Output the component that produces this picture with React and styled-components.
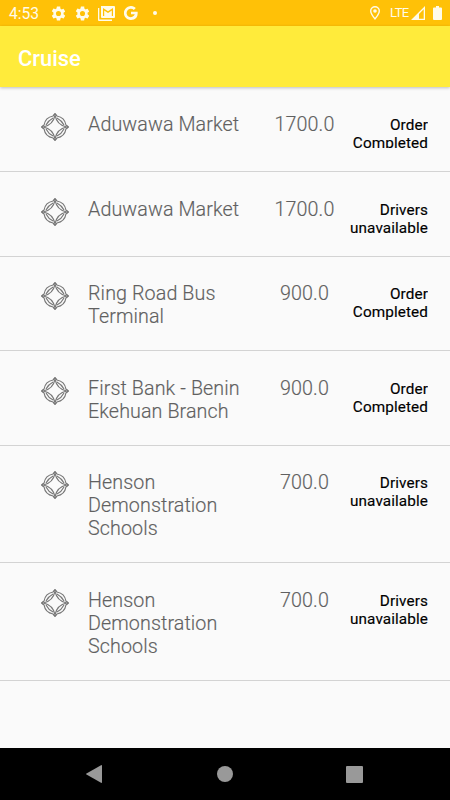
import React from 'react';
import styled, { createGlobalStyle } from 'styled-components';

const GlobalStyle = createGlobalStyle`
  * { box-sizing: border-box; }
  body { margin: 0; background: #fafafa; font-family: Roboto, sans-serif; }
`;

const Screen = styled.div`
  width: 450px;
  height: 800px;
  display: flex;
  flex-direction: column;
  overflow: hidden;
  background: #fafafa;
`;

const StatusBar = styled.header`
  height: 26px;
  flex: none;
  display: flex;
  align-items: center;
  justify-content: space-between;
  padding: 0 8px 0 9px;
  background: #ffc107;
  color: #fffbea;
`;

const StatusGroup = styled.div`
  display: flex;
  align-items: center;
  height: 26px;
`;

const Clock = styled.span`
  width: 41px;
  font-size: 15.6px;
  line-height: 26px;
  padding-top: 2px;
`;

const Network = styled.span`
  width: 21px;
  font-size: 13px;
  line-height: 26px;
  letter-spacing: -0.6px;
  white-space: nowrap;
`;

const Glyph = styled.svg`
  display: block;
  flex: none;
  fill: currentColor;
  width: ${(p) => p.$w || 16}px;
  height: ${(p) => p.$h || p.$w || 16}px;
  margin-left: ${(p) => p.$gap || 0}px;
`;

const AppBar = styled.div`
  height: 61px;
  flex: none;
  display: flex;
  align-items: center;
  padding: 4px 18px 0;
  background: #ffeb3b;
  color: #fff;
  box-shadow: 0 1px 3px rgba(0, 0, 0, 0.24);
  z-index: 1;
`;

const Title = styled.h1`
  margin: 0;
  font-size: 21.9px;
  font-weight: 500;
  line-height: 26px;
`;

const OrderList = styled.ul`
  flex: 1;
  min-height: 0;
  margin: 0;
  padding: 0;
  list-style: none;
`;

const OrderRow = styled.li`
  display: grid;
  grid-template-columns: 47px 170px 92px 78px;
  align-items: start;
  height: ${(p) => p.$height}px;
  padding: 25.6px 22px 0 41px;
  border-bottom: 1px solid #d3d3d3;
`;

const Place = styled.span`
  color: #606060;
  font-size: 19.7px;
  font-weight: 300;
  line-height: 23px;
  letter-spacing: 0.1px;
  -webkit-text-stroke: 0.15px #606060;
  white-space: pre-line;
`;

const Fare = styled(Place)`
  padding-left: 1px;
  text-align: center;
`;

const Status = styled.span`
  height: ${(p) => (p.$clipped ? 35.4 : 42)}px;
  margin-left: -10px;
  padding-top: 3px;
  overflow: hidden;
  color: #000;
  font-size: 15.3px;
  letter-spacing: 0.1px;
  -webkit-text-stroke: 0.15px #000;
  line-height: 18px;
  text-align: right;
  white-space: pre-line;
`;

const NavBar = styled.nav`
  height: 52px;
  flex: none;
  display: flex;
  align-items: center;
  justify-content: space-between;
  padding: 0 87px 0 86px;
  background: #000;
  color: #999;
`;

const orders = [
  { place: 'Aduwawa Market', fare: '1700.0', status: 'Order\nCompleted', height: 85, clipped: true },
  { place: 'Aduwawa Market', fare: '1700.0', status: 'Drivers\nunavailable', height: 84.5 },
  { place: 'Ring Road Bus\nTerminal', fare: '900.0', status: 'Order\nCompleted', height: 94.5 },
  { place: 'First Bank - Benin\nEkehuan Branch', fare: '900.0', status: 'Order\nCompleted', height: 94.5 },
  { place: 'Henson\nDemonstration\nSchools', fare: '700.0', status: 'Drivers\nunavailable', height: 117.5 },
  { place: 'Henson\nDemonstration\nSchools', fare: '700.0', status: 'Drivers\nunavailable', height: 117.5 },
];

const gearPath =
  'M19.14 12.94c.04-.3.06-.61.06-.94 0-.32-.02-.64-.07-.94l2.03-1.58a.49.49 0 0 0 .12-.61l-1.92-3.32a.49.49 0 0 0-.59-.22l-2.39.96a7 7 0 0 0-1.62-.94l-.36-2.54A.48.48 0 0 0 13.92 2h-3.84a.48.48 0 0 0-.47.41l-.36 2.54c-.59.24-1.13.57-1.62.94l-2.39-.96a.48.48 0 0 0-.59.22L2.74 8.47a.48.48 0 0 0 .12.61l2.03 1.58a6 6 0 0 0 0 2.68l-2.03 1.58a.49.49 0 0 0-.12.61l1.92 3.32c.12.22.37.29.59.22l2.39-.96c.5.38 1.03.7 1.62.94l.36 2.54c.05.24.24.41.48.41h3.84c.24 0 .44-.17.47-.41l.36-2.54a7 7 0 0 0 1.62-.94l2.39.96c.22.08.47 0 .59-.22l1.92-3.32a.48.48 0 0 0-.12-.61zM12 15.6A3.6 3.6 0 1 1 12 8.4a3.6 3.6 0 0 1 0 7.2z';

function Gear({ gap }) {
  return (
    <Glyph $w={17} $gap={gap} viewBox="0 0 24 24">
      <path d={gearPath} />
    </Glyph>
  );
}

function CompassMark() {
  return (
    <Glyph $w={28} $h={28} viewBox="-14 -14 28 28">
      <g fill="none" stroke="#777" strokeWidth="1.15" strokeLinejoin="round">
        {[0, 90, 180, 270].map((angle) => (
          <g key={angle} transform={`rotate(${angle})`}>
            <path d="M0-13.4 1.9-11A11.2 11.2 0 0 1 11-1.9L13.4 0" />
            <path d="M0-13.4-1.9-11" />
            <path d="M13.4 0 11 1.9" />
            <path d="M0-11.6Q2-2 11.6 0" />
            <path d="M1.9-9Q6.6-6.6 9-1.9" />
          </g>
        ))}
      </g>
    </Glyph>
  );
}

export default function App() {
  return (
    <>
      <GlobalStyle />
      <Screen>
        <StatusBar>
          <StatusGroup>
            <Clock>4:53</Clock>
            <Gear />
            <Gear gap={7} />
            <Glyph $w={17} $h={15} $gap={7} viewBox="0 0 17 15">
              <path fillRule="evenodd" d="M3 0h13q1 0 1 1v10q0 1-1 1H4q-1 0-1-1zM5 2v8h1.2V4.5L10 7l3.8-2.5V10H15V2l-5 3.3z" />
              <path d="M0 2h1.3v11.5H14V15H1q-1 0-1-1z" />
            </Glyph>
            <Glyph $w={14} $gap={9} viewBox="0 0 14 14">
              <path d="M7 5.7h6.6Q14.4 14 7 14A7 7 0 1 1 11.8 2L9.8 4A4.2 4.2 0 1 0 10.8 8.3H7z" />
            </Glyph>
            <Glyph $w={4} $gap={15} viewBox="0 0 4 4"><circle cx="2" cy="2" r="2" /></Glyph>
          </StatusGroup>
          <StatusGroup>
            <Glyph $w={10} $h={14} viewBox="0 0 10 14">
              <path fillRule="evenodd" d="M5 0a5 5 0 0 1 5 5Q10 8 5 14 0 8 0 5a5 5 0 0 1 5-5zm0 1.4A3.6 3.6 0 0 0 1.4 5Q1.4 7.2 5 11.8 8.6 7.2 8.6 5A3.6 3.6 0 0 0 5 1.4z" />
              <circle cx="5" cy="5" r="1.8" />
            </Glyph>
            <Glyph $w={10} viewBox="0 0 10 10" />
            <Network>LTE</Network>
            <Glyph $w={14} $h={14} viewBox="0 0 14 14">
              <path fillRule="evenodd" d="M14 0v14H0zM12.7 3.2 8 7.9v4.8h4.7z" />
            </Glyph>
            <Glyph $w={9} $h={14} $gap={8} viewBox="0 0 9 14">
              <path d="M3 0h3v1.5h2q1 0 1 1V13q0 1-1 1H1q-1 0-1-1V2.5q0-1 1-1h2z" />
            </Glyph>
          </StatusGroup>
        </StatusBar>
        <AppBar>
          <Title>Cruise</Title>
        </AppBar>
        <OrderList>
          {orders.map((order, i) => (
            <OrderRow key={i} $height={order.height}>
              <CompassMark />
              <Place>{order.place}</Place>
              <Fare>{order.fare}</Fare>
              <Status $clipped={order.clipped}>{order.status}</Status>
            </OrderRow>
          ))}
        </OrderList>
        <NavBar>
          <Glyph $w={16} $h={18} viewBox="0 0 16 18">
            <path d="M15 .2q1-.5 1 .7v16.2q0 1.2-1 .7L.5 9.6q-1-.6 0-1.2z" />
          </Glyph>
          <Glyph $w={16} $gap={1} viewBox="0 0 16 16"><circle cx="8" cy="8" r="8" /></Glyph>
          <Glyph $w={17} viewBox="0 0 17 17"><rect width="17" height="17" rx="1" /></Glyph>
        </NavBar>
      </Screen>
    </>
  );
}
